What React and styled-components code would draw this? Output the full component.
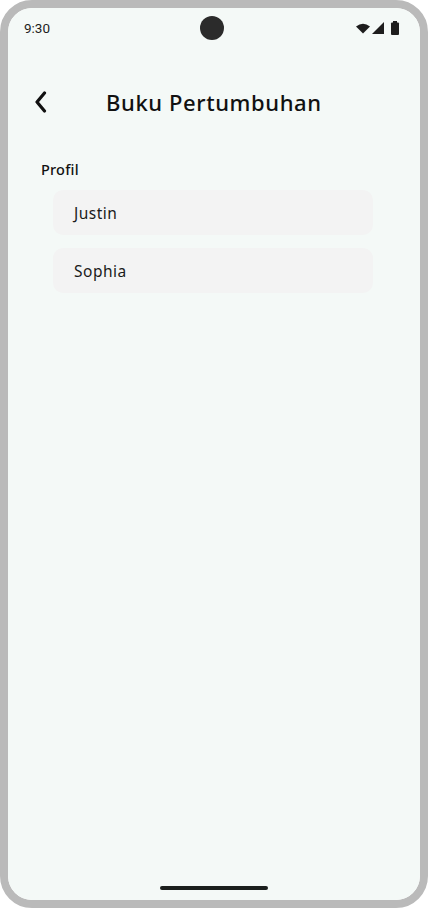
import React from 'react';
import styled, { createGlobalStyle } from 'styled-components';

const Global = createGlobalStyle`
  html, body {
    margin: 0;
    padding: 0;
    background: #ffffff;
  }
  * { box-sizing: border-box; }
`;

const Frame = styled.div`
  width: 428px;
  height: 908px;
  border: 8px solid #bababa;
  border-radius: 32px;
  overflow: hidden;
`;

const Screen = styled.div`
  height: 100%;
  background: #f4f9f7;
  border-radius: 24px;
  display: flex;
  flex-direction: column;
`;

const StatusBar = styled.div`
  height: 40px;
  padding: 0 20px 0 16px;
  display: grid;
  grid-template-columns: 1fr auto 1fr;
  align-items: center;
  font-family: Roboto, "Liberation Sans", sans-serif;
  font-size: 13.5px;
  color: #1d1d1d;
`;

const Camera = styled.div`
  width: 24px;
  height: 24px;
  border-radius: 50%;
  background: #2b2b2b;
`;

const Icons = styled.div`
  justify-self: end;
  display: flex;
  align-items: center;
  gap: 2px;
`;

const Header = styled.div`
  display: flex;
  align-items: center;
  height: 44px;
  margin-top: 32px;
  padding-left: 21px;
`;

const Back = styled.button`
  border: none;
  background: none;
  padding: 0;
  width: 24px;
  height: 24px;
  display: flex;
  align-items: center;
  justify-content: center;
  cursor: pointer;
`;

const Title = styled.h1`
  margin: 0 0 0 53px;
  font-family: "Noto Sans", "Open Sans", sans-serif;
  font-weight: 500;
  font-size: 22px;
  letter-spacing: 0.6px;
  color: #111;
`;

const Section = styled.div`
  padding: 35px 0 0 33px;
  display: flex;
  flex-direction: column;
`;

const Label = styled.div`
  font-family: "Noto Sans", "Open Sans", sans-serif;
  font-weight: 500;
  font-size: 14.5px;
  letter-spacing: 0.2px;
  color: #111;
  margin-bottom: 11px;
`;

const List = styled.div`
  display: flex;
  flex-direction: column;
  gap: 13px;
  padding-left: 12px;
  width: 332px;
`;

const Card = styled.div`
  height: 45px;
  border-radius: 10px;
  background: #f3f3f3;
  display: flex;
  align-items: center;
  padding-left: 21px;
  font-family: "Noto Sans", "Open Sans", sans-serif;
  font-size: 15.5px;
  letter-spacing: 0.5px;
  color: #1a1a1a;
`;

const Spacer = styled.div`
  flex: 1;
`;

const HomeBar = styled.div`
  align-self: center;
  width: 108px;
  height: 4px;
  border-radius: 2px;
  background: #1b1f1d;
  margin-bottom: 10px;
`;

const profiles = ['Justin', 'Sophia'];

export default function App() {
  return (
    <>
      <Global />
      <Frame>
        <Screen>
          <StatusBar>
            <span>9:30</span>
            <Camera />
            <Icons>
              <svg width="14" height="11" viewBox="0 0 14 11">
                <path d="M0 3.5 Q7 -2 14 3.5 L7 10.5 Z" fill="#1d1d1d" />
              </svg>
              <svg width="12" height="12" viewBox="0 0 12 12">
                <path d="M12 0 V12 H0 Z" fill="#1d1d1d" />
              </svg>
              <svg width="10" height="14" viewBox="0 0 10 14" style={{ marginLeft: 4 }}>
                <rect x="3" y="0" width="4" height="2" fill="#1d1d1d" />
                <rect x="1" y="1.5" width="8" height="12.5" rx="1" fill="#1d1d1d" />
              </svg>
            </Icons>
          </StatusBar>
          <Header>
            <Back aria-label="Kembali">
              <svg width="14" height="22" viewBox="0 0 14 22">
                <path d="M10.5 2 L3 11 L10.5 20" fill="none" stroke="#111" strokeWidth="3.2" strokeLinecap="round" strokeLinejoin="round" />
              </svg>
            </Back>
            <Title>Buku Pertumbuhan</Title>
          </Header>
          <Section>
            <Label>Profil</Label>
            <List>
              {profiles.map((p) => (
                <Card key={p}>{p}</Card>
              ))}
            </List>
          </Section>
          <Spacer />
          <HomeBar />
        </Screen>
      </Frame>
    </>
  );
}
